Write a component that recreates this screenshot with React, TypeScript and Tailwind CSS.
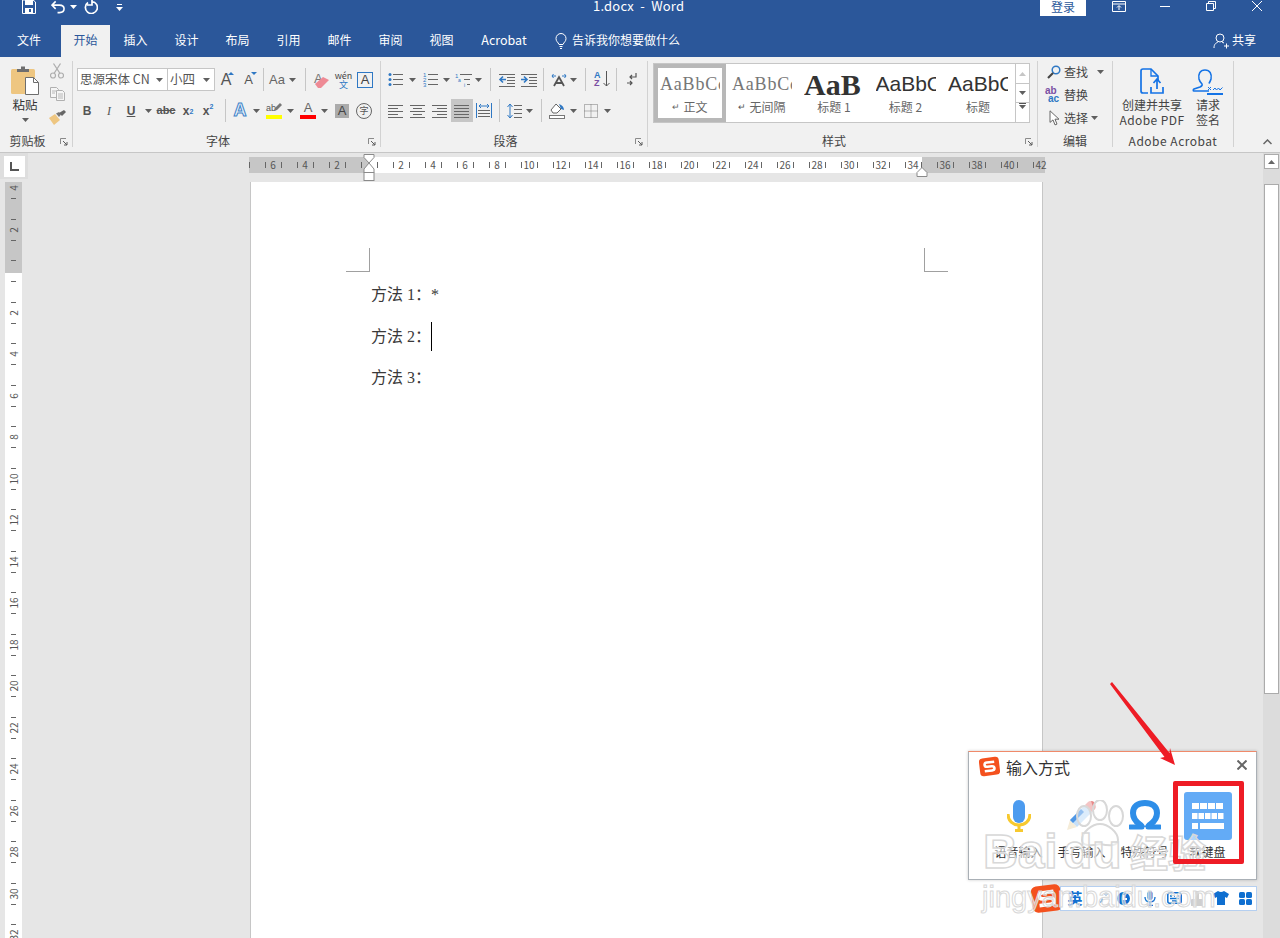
import type { ReactNode } from 'react';

const G = '#5f5f5f';
const B = '#2f78c4';

function Cell({ c, children }: { c: string; children?: ReactNode }) {
  return <div className={`flex flex-none items-center justify-center ${c}`}>{children}</div>;
}

function Caret({ color = G }: { color?: string }) {
  return (
    <svg width="7" height="4" viewBox="0 0 7 4" className="flex-none">
      <path d="M0 0h7L3.5 4z" fill={color} />
    </svg>
  );
}

function Sep() {
  return <div className="h-[23px] w-px flex-none bg-[#c6c6c6]" />;
}

function GroupSep() {
  return <div className="my-1 h-[86px] w-px flex-none bg-[#d2d2d2]" />;
}

function Launcher() {
  return (
    <svg width="8" height="8" viewBox="0 0 8 8" className="absolute right-[4px] top-[7px]">
      <path d="M.5 6V.5H6" fill="none" stroke="#8a8a8a" />
      <path d="M3 3l4 4M7 4v3H4" fill="none" stroke="#5a5a5a" />
    </svg>
  );
}

function Group({ w, label, children, launcher, lc = '' }: { w: string; label: string; children: ReactNode; launcher?: boolean; lc?: string }) {
  return (
    <div className={`flex flex-none flex-col ${w}`}>
      <div className="h-[74px]">{children}</div>
      <div className={`relative h-[20px] text-center text-[12px] leading-[20px] text-[#444] ${launcher ? 'pr-[17px]' : ''} ${lc}`}>
        {label}
        {launcher && <Launcher />}
      </div>
    </div>
  );
}

// lines helper for the paragraph icons: [x, y, width]
function Bars({ w = 16, h = 14, bars, color = '#666' }: { w?: number; h?: number; bars: number[][]; color?: string }) {
  return (
    <svg width={w} height={h} viewBox={`0 0 ${w} ${h}`} className="flex-none">
      {bars.map((b, i) => (
        <rect key={i} x={b[0]} y={b[1]} width={b[2]} height="1" fill={color} />
      ))}
    </svg>
  );
}

function ListIcon({ kind }: { kind: 'bullet' | 'number' | 'multi' }) {
  const ys = [2, 7, 12];
  if (kind === 'multi')
    return (
      <svg width="18" height="15" viewBox="0 0 18 15" className="flex-none">
        <text x="0" y="6" fontSize="6" fill={B} fontFamily="Liberation Sans">1</text>
        <text x="3" y="10" fontSize="5" fill={B} fontFamily="Liberation Sans">a</text>
        <text x="9" y="15" fontSize="5" fill={B} fontFamily="Liberation Sans">i</text>
        <rect x="5" y="2" width="12" height="1" fill="#666" />
        <rect x="9" y="7" width="6" height="1" fill="#666" />
        <rect x="12" y="12" width="3" height="1" fill="#666" />
      </svg>
    );
  return (
    <svg width="15" height="15" viewBox="0 0 15 15" className="flex-none">
      {ys.map((y, i) =>
        kind === 'bullet' ? (
          <circle key={y} cx="2" cy={y + 0.5} r="1.5" fill={B} />
        ) : (
          <text key={y} x="0" y={y + 2.5} fontSize="6" fill={B} fontFamily="Liberation Sans">{i + 1}</text>
        ),
      )}
      {ys.map((y) => (
        <rect key={y} x="5" y={y} width="10" height="1" fill="#666" />
      ))}
    </svg>
  );
}

function IndentIcon({ dir }: { dir: 'in' | 'out' }) {
  return (
    <svg width="17" height="14" viewBox="0 0 17 14" className="flex-none">
      <rect x="1" y="1" width="16" height="1" fill="#666" />
      <rect x="9" y="4" width="8" height="1" fill="#666" />
      <rect x="9" y="7" width="8" height="1" fill="#666" />
      <rect x="9" y="10" width="8" height="1" fill="#666" />
      <rect x="1" y="13" width="16" height="1" fill="#666" />
      {dir === 'out' ? (
        <path d="M8 6.5H2M5 3.5l-3 3 3 3" fill="none" stroke={B} strokeWidth="1.6" />
      ) : (
        <path d="M1 6.5h6M4 3.5l3 3-3 3" fill="none" stroke={B} strokeWidth="1.6" />
      )}
    </svg>
  );
}

function LayoutIcon() {
  return (
    <svg width="16" height="14" viewBox="0 0 16 14" className="flex-none">
      <path d="M3 13l5-9 5 9M5 10h6" fill="none" stroke="#555" strokeWidth="1.8" />
      <path d="M5 3H1M2.5 1L1 3l1.5 2M11 3h4M13.5 1L15 3l-1.5 2" fill="none" stroke={B} strokeWidth="1" />
    </svg>
  );
}

function SortIcon() {
  return (
    <div className="relative flex h-[17px] w-[16px] flex-none flex-col items-start font-['Liberation_Sans',sans-serif] text-[9px] font-bold leading-[8px]">
      <span className="text-[#2f78c4]">A</span>
      <span className="text-[#7b4fa3]">Z</span>
      <svg width="7" height="16" viewBox="0 0 7 16" className="absolute right-0 top-0">
        <path d="M3.5 0v15M.5 12l3 3 3-3" fill="none" stroke="#555" />
      </svg>
    </div>
  );
}

function MarkIcon() {
  return (
    <svg width="11" height="15" viewBox="0 0 11 15" className="flex-none">
      <path d="M10 1v4H4M6 3L4 5l2 2" fill="none" stroke="#555" strokeWidth="1.2" />
      <path d="M1 11h5M4 9l2 2-2 2" fill="none" stroke="#555" strokeWidth="1.2" />
    </svg>
  );
}

function Distributed() {
  return (
    <svg width="16" height="16" viewBox="0 0 16 16" className="flex-none">
      <path d="M.5 0v15M15.5 0v15" stroke={B} />
      <path d="M3 3h10M5 1L3 3l2 2M11 1l2 2-2 2" fill="none" stroke={B} />
      <rect x="2" y="7" width="12" height="1" fill="#666" />
      <rect x="2" y="10" width="12" height="1" fill="#666" />
      <rect x="2" y="13" width="12" height="1" fill="#666" />
    </svg>
  );
}

function LineSpacing() {
  return (
    <svg width="15" height="16" viewBox="0 0 15 16" className="flex-none">
      <path d="M3 1v14M.5 4L3 1l2.500 3M.5 12L3 15l2.500-3" fill="none" stroke={B} />
      <rect x="7" y="2" width="8" height="1" fill="#666" />
      <rect x="7" y="6" width="8" height="1" fill="#666" />
      <rect x="7" y="10" width="8" height="1" fill="#666" />
      <rect x="7" y="14" width="8" height="1" fill="#666" />
    </svg>
  );
}

function Shading() {
  return (
    <svg width="16" height="17" viewBox="0 0 16 17" className="flex-none">
      <path d="M2 8l5-6 5 5-4 4H4z" fill="#fff" stroke="#666" />
      <path d="M10 2c3 1 5 3 5 6l-3-1z" fill={B} />
      <rect x=".5" y="13.500" width="15" height="3" fill="#fff" stroke="#777" />
    </svg>
  );
}

function Borders() {
  return (
    <svg width="14" height="14" viewBox="0 0 14 14" className="flex-none">
      <path d="M.5.500h13v13H.5zM7 .5v13M.5 7h13" fill="none" stroke="#777" strokeDasharray="1 1" />
    </svg>
  );
}

function Paste() {
  return (
    <svg width="28" height="30" viewBox="0 0 28 30">
      <rect x="0" y="4" width="24" height="25" rx="1.500" fill="#eec681" />
      <path d="M6 7V4h4V1.500h4V4h4v3z" fill="#6e6e6e" />
      <path d="M14.500 12.500h8l5 5v12h-13z" fill="#fff" stroke="#6e6e6e" />
      <path d="M22.500 12.500v5h5" fill="none" stroke="#6e6e6e" />
    </svg>
  );
}

function Scissors() {
  return (
    <svg width="14" height="16" viewBox="0 0 14 16">
      <circle cx="3" cy="12.500" r="2.500" fill="none" stroke="#aeaeae" strokeWidth="1.200" />
      <circle cx="11" cy="12.500" r="2.500" fill="none" stroke="#aeaeae" strokeWidth="1.200" />
      <path d="M4 10.500L10.500.5M10 10.500L3.500.5" stroke="#aeaeae" strokeWidth="1.300" />
    </svg>
  );
}

function CopyIcon() {
  return (
    <svg width="15" height="14" viewBox="0 0 15 14">
      <path d="M.5.500h6l2 2v8h-8z" fill="#f5f5f5" stroke="#b0b0b0" />
      <path d="M6.500 3.500h6l2 2v8h-8z" fill="#f5f5f5" stroke="#b0b0b0" />
      <path d="M8 7h5M8 9h5M8 11h5M2 4h4M2 6h3" stroke="#b8b8b8" />
    </svg>
  );
}

function Painter() {
  return (
    <svg width="17" height="15" viewBox="0 0 17 15">
      <path d="M0 8l6-4 5 6-6 5z" fill="#eec681" />
      <path d="M7 3.500l3-1.500 2 2.500-2 2.500z" fill="#777" />
      <path d="M10 3l5-3 2 2-4 4z" fill="#666" />
    </svg>
  );
}

function Eraser() {
  return (
    <div className="relative h-[16px] w-[16px] flex-none">
      <span className="absolute left-[0px] top-[-3px] font-['Liberation_Sans',sans-serif] text-[13px] text-[#777]">A</span>
      <svg width="16" height="16" viewBox="0 0 16 16" className="absolute left-0 top-0">
        <path d="M1 12l8-7 6 3-8 8H4z" fill="#ee8a95" />
      </svg>
    </div>
  );
}

function Wen() {
  return (
    <div className="flex w-[18px] flex-none flex-col items-center text-[9px] leading-[9px]">
      <span className="text-[#444]">wén</span>
      <span className="text-[#2f78c4]">文</span>
    </div>
  );
}

function Search() {
  return (
    <svg width="14" height="14" viewBox="0 0 14 14" className="flex-none">
      <circle cx="9" cy="5" r="3.800" fill="none" stroke="#2f78c4" strokeWidth="1.500" />
      <path d="M6 8l-5 5" stroke="#444" strokeWidth="2.200" />
    </svg>
  );
}

function CursorIcon() {
  return (
    <svg width="11" height="16" viewBox="0 0 11 16" className="flex-none">
      <path d="M1 .8v11.600l3-2.500 2 5 2-.8-2-4.900h4z" fill="#fff" stroke="#666" />
    </svg>
  );
}

function PdfShare() {
  return (
    <svg width="24" height="26" viewBox="0 0 24 26">
      <path d="M8 25H3q-2 0-2-2V3q0-2 2-2h8l7 7v4" fill="none" stroke="#1473e6" strokeWidth="1.700" />
      <path d="M11 1v7h7" fill="none" stroke="#1473e6" strokeWidth="1.300" />
      <path d="M11 19v6h12v-6M17 21v-9M13.500 15l3.500-4 3.500 4" fill="none" stroke="#1473e6" strokeWidth="1.700" />
    </svg>
  );
}

function SignIcon() {
  return (
    <svg width="32" height="27" viewBox="0 0 32 27">
      <path d="M13 2c-5 0-7 4-6 9 .5 2 2 4 3 5 .5 1 0 2-2 3l-6 2c-1 .5-1 2 0 2h15M13 2c5 0 7 4 6 9-.5 2-1.500 3.500-2 4.500" fill="none" stroke="#1473e6" strokeWidth="1.600" />
      <path d="M16 19l3 3M19 19l-3 3" stroke="#1473e6" />
      <path d="M21 22l2-2 1.500 2 2-2 1.500 2 2.500-2.500" fill="none" stroke="#1473e6" />
      <rect x="15" y="25" width="16" height="2" fill="#1473e6" />
    </svg>
  );
}

function SogouLogo({ size }: { size: number }) {
  return (
    <svg width={size} height={size} viewBox="0 0 20 20" className="flex-none">
      <g transform="rotate(-7 10 10)">
        <rect x=".5" y="1.500" width="19" height="17" rx="3.500" fill="#f4511e" />
        <path d="M15 6H8q-2.500 0-2.500 2T8 10h4q2.500 0 2.500 2T12 14H5" fill="none" stroke="#fff" strokeWidth="2.400" />
      </g>
    </svg>
  );
}

function MicIcon() {
  return (
    <svg width="24" height="32" viewBox="0 0 24 32">
      <rect x="6" y="0" width="12" height="23" rx="6" fill="#4c9bef" />
      <path d="M1 14c0 7 5 11 11 11s11-4 11-11" fill="none" stroke="#f7c92f" strokeWidth="3" />
      <path d="M12 25v5M8 30.500h8" stroke="#f7c92f" strokeWidth="3" />
    </svg>
  );
}

function PenIcon() {
  return (
    <svg width="30" height="30" viewBox="0 0 30 30">
      <path d="M0 30l3-10 7 7z" fill="#f5ecd8" />
      <path d="M3 20L18 5l7 7-15 15z" fill="#c5dff8" />
      <path d="M3 20L14 9l3 3L6 23z" fill="#4f97e6" />
      <path d="M18 5l3-3q2-2 5 0l2 2q2 3 0 5l-3 3z" fill="#f4c4c4" />
      <path d="M24 1q2 0 3 1l1 2q1 3 0 5l-1 1z" fill="#e88888" />
    </svg>
  );
}

function OmegaIcon() {
  return (
    <svg width="32" height="30" viewBox="0 0 32 30">
      <path d="M13 27c0-3-9-4-9-14C4 6 9 3 16 3s12 3 12 10c0 10-9 11-9 14" fill="none" stroke="#2e8ee8" strokeWidth="6" />
      <path d="M1 27h12M19 27h12" stroke="#2e8ee8" strokeWidth="5" strokeLinecap="round" />
    </svg>
  );
}

function KeyboardIcon() {
  const rows = [
    { y: 11, xs: [8, 16, 24, 32], w: 7 },
    { y: 21, xs: [8, 14.500, 21, 27.500, 34], w: 5.500 },
  ];
  return (
    <svg width="48" height="48" viewBox="0 0 48 48">
      <rect width="48" height="48" rx="3" fill="#63abf6" />
      {rows.map((r) =>
        r.xs.map((x) => <rect key={`${r.y}-${x}`} x={x} y={r.y} width={r.w} height="6" fill="#fff" />),
      )}
      <rect x="8" y="31" width="6" height="6" fill="#fff" />
      <rect x="16" y="31" width="24" height="6" fill="#fff" />
    </svg>
  );
}

function TrayIcons() {
  const blue = '#0f6fd0';
  return (
    <>
      <Cell c="w-[16px] ml-[6px] h-full text-[15px] font-bold text-[#0f6fd0]">英</Cell>
      <Cell c="w-[12px] ml-[13px] h-full">
        <svg width="11" height="12" viewBox="0 0 11 12">
          <circle cx="9" cy="2" r="1.300" fill="none" stroke="#9ab8d8" />
          <path d="M5 6.500q1 2-2 4" fill="none" stroke={blue} strokeWidth="1.600" />
        </svg>
      </Cell>
      <Cell c="w-[13px] ml-[9px] h-full">
        <svg width="13" height="13" viewBox="0 0 13 13">
          <circle cx="6.500" cy="6.500" r="6.500" fill={blue} />
          <path d="M6.500 3v4h3.500" fill="none" stroke="#fff" strokeWidth="2" />
        </svg>
      </Cell>
      <Cell c="w-[12px] ml-[14px] h-full">
        <svg width="12" height="15" viewBox="0 0 12 15">
          <rect x="3.500" y="0" width="5" height="9" rx="2.500" fill={blue} />
          <path d="M1 6c0 3 2 5 5 5s5-2 5-5M6 11v3M3 14.500h6" fill="none" stroke={blue} strokeWidth="1.300" />
        </svg>
      </Cell>
      <Cell c="w-[15px] ml-[11px] h-full">
        <svg width="15" height="12" viewBox="0 0 15 12">
          <rect x=".8" y=".8" width="13.400" height="10.400" rx="2" fill="none" stroke={blue} strokeWidth="1.500" />
          <path d="M3 4h2M7 4h1M10 4h2M3 6.500h9M5 9h5" stroke={blue} strokeWidth="1.400" />
        </svg>
      </Cell>
      <Cell c="w-[12px] ml-[9px] h-full">
        <svg width="12" height="15" viewBox="0 0 12 15">
          <path d="M4 0h4v8h3q1 0 1 1v6H0V9q0-1 1-1h3z" fill="#cfcfcf" />
        </svg>
      </Cell>
      <Cell c="w-[16px] ml-[10px] h-full">
        <svg width="16" height="14" viewBox="0 0 16 14">
          <path d="M5 0q3 2 6 0l5 3-2 4-2-1v8H4V6L2 7 0 3z" fill={blue} />
        </svg>
      </Cell>
      <Cell c="w-[13px] ml-[10px] h-full">
        <svg width="13" height="13" viewBox="0 0 13 13">
          <rect width="6" height="6" rx="1.500" fill={blue} />
          <rect x="7" width="6" height="6" rx="1.500" fill={blue} />
          <rect y="7" width="6" height="6" rx="1.500" fill={blue} />
          <rect x="7" y="7" width="6" height="6" rx="1.500" fill={blue} />
        </svg>
      </Cell>
    </>
  );
}

function StyleItem({ preview, label, w, mark }: { preview: ReactNode; label: string; w: string; mark?: boolean }) {
  return (
    <div className={`flex flex-none flex-col items-center pt-[2px] ${w}`}>
      <div className="flex h-[36px] w-[60px] flex-none items-center overflow-hidden whitespace-nowrap">{preview}</div>
      <div className="flex h-[10px] flex-none items-center text-[12px] text-[#666]">
        {mark && <span className="mr-[3px] text-[9px] text-[#555]">↵</span>}
        {label}
      </div>
    </div>
  );
}

function RulerH() {
  const cells = Array.from({ length: 100 }, (_, i) => i);
  return (
    <div className="absolute left-[-4px] top-0 flex h-full">
      {cells.map((i) => (
        <div key={i} className="flex h-full w-[8px] flex-none items-center justify-center overflow-visible">
          {i % 2 === 0 && <div className="h-[6px] w-px flex-none bg-[#666]" />}
          {i % 4 === 3 && i !== 15 && (
            <span className="flex-none text-[10px] leading-none text-[#555]">{Math.abs(i - 15) / 2}</span>
          )}
        </div>
      ))}
    </div>
  );
}

function RulerV() {
  const cells = Array.from({ length: 73 }, (_, i) => i);
  return (
    <div className="absolute left-0 top-[1px] flex w-full flex-col">
      {cells.map((i) => (
        <div key={i} className="flex h-[10.375px] w-full flex-none items-center justify-center">
          {i % 2 === 1 && <div className="h-px w-[5px] flex-none bg-[#666]" />}
          {i % 4 === 0 && i !== 8 && (
            <span className="flex-none -rotate-90 text-[10px] leading-none text-[#555]">{Math.abs(i - 8) / 2}</span>
          )}
        </div>
      ))}
    </div>
  );
}

export default function App() {
  return (
    <div className="relative flex h-[938px] w-[1280px] flex-col overflow-hidden bg-[#e6e6e6] font-['Noto_Sans_CJK_SC','Liberation_Sans',sans-serif]">
      {/* title bar */}
      <div className="flex h-[57px] flex-none flex-col bg-[#2b579a] text-white">
        <div className="relative flex h-[25px] flex-none items-start">
          <Cell c="w-[14px] ml-[22px] h-[14px]">
            <svg width="14" height="14" viewBox="0 0 14 14">
              <path d="M.5 0v13.500h13V2L11 0z" fill="none" stroke="#fff" />
              <rect x="3" y="0" width="8" height="5" fill="#fff" />
              <rect x="3" y="8" width="8" height="5.500" fill="#fff" />
              <rect x="7" y="9" width="2" height="3" fill="#2b579a" />
            </svg>
          </Cell>
          <Cell c="w-[14px] ml-[15px] h-[14px]">
            <svg width="15" height="14" viewBox="0 0 15 14">
              <path d="M1 5h8q5 0 5 4t-5 4H7M5 1L1 5l4 4" fill="none" stroke="#fff" strokeWidth="1.700" />
            </svg>
          </Cell>
          <Cell c="w-[7px] ml-[5px] h-[14px]"><Caret color="#fff" /></Cell>
          <Cell c="w-[14px] ml-[7px] h-[14px]">
            <svg width="14" height="14" viewBox="0 0 14 14">
              <path d="M4 2.500A6 6 0 1 0 8 1.500M8 0v5H3" fill="none" stroke="#fff" strokeWidth="1.700" />
            </svg>
          </Cell>
          <Cell c="w-[7px] ml-[18px] h-[14px]">
            <svg width="7" height="8" viewBox="0 0 7 8">
              <rect x="1" y="1" width="5" height="1" fill="#fff" />
              <path d="M0 4h7L3.500 8z" fill="#fff" />
            </svg>
          </Cell>
          <div className="ml-[470px] w-[96px] flex-none whitespace-pre text-[13px] leading-[11px] tracking-[.2px]">1.docx  -  Word</div>
          <div className="ml-[351px] h-[16px] w-[46px] flex-none bg-white text-center text-[12px] leading-[14px] text-[#2b579a]">登录</div>
          <Cell c="w-[14px] ml-[26px] h-[12px]">
            <svg width="14" height="11" viewBox="0 0 14 11">
              <path d="M.5.500h13v10H.5zM.5 3h13M7 9V5M5 6.500L7 4.500l2 2" fill="none" stroke="#fff" />
            </svg>
          </Cell>
          <Cell c="w-[10px] ml-[34px] h-[12px]"><div className="h-px w-[10px] bg-white" /></Cell>
          <Cell c="w-[10px] ml-[36px] h-[12px]">
            <svg width="10" height="10" viewBox="0 0 10 10">
              <path d="M.5 2.500h7v7h-7zM2.500 2.500V.5h7v7h-2" fill="none" stroke="#fff" />
            </svg>
          </Cell>
          <Cell c="w-[10px] ml-[36px] h-[12px]">
            <svg width="10" height="10" viewBox="0 0 10 10">
              <path d="M0 0l10 10M10 0L0 10" stroke="#fff" />
            </svg>
          </Cell>
        </div>
        <div className="flex h-[32px] flex-none items-stretch text-[12px] leading-[30px]">
          <div className="ml-[4px] w-[50px] flex-none text-center">文件</div>
          <div className="ml-[7px] w-[49px] flex-none bg-[#f1f1f1] text-center text-[#2b579a]">开始</div>
          <div className="w-[51px] flex-none text-center">插入</div>
          <div className="w-[51px] flex-none text-center">设计</div>
          <div className="w-[51px] flex-none text-center">布局</div>
          <div className="w-[51px] flex-none text-center">引用</div>
          <div className="w-[51px] flex-none text-center">邮件</div>
          <div className="w-[51px] flex-none text-center">审阅</div>
          <div className="w-[51px] flex-none text-center">视图</div>
          <div className="w-[74px] flex-none text-center text-[12.500px]">Acrobat</div>
          <Cell c="w-[12px] ml-[14px]">
            <svg width="12" height="16" viewBox="0 0 12 16">
              <path d="M4 11.500C3 9 1 8.500 1 5.500a5 5 0 0 1 10 0c0 3-2 3.500-3 6zM4.500 13.500h3M5 15.500h2" fill="none" stroke="#fff" />
            </svg>
          </Cell>
          <div className="ml-[5px] w-[110px] flex-none whitespace-nowrap">告诉我你想要做什么</div>
          <Cell c="w-[16px] ml-[531px]">
            <svg width="16" height="16" viewBox="0 0 16 16">
              <circle cx="7" cy="5" r="4" fill="none" stroke="#fff" />
              <path d="M1 15c0-4 2-5 4-6M9 9l2 1M11 13h5M13.500 10.500v5" fill="none" stroke="#fff" />
            </svg>
          </Cell>
          <div className="ml-[3px] w-[26px] flex-none whitespace-nowrap">共享</div>
        </div>
      </div>

      {/* ribbon */}
      <div className="flex h-[96px] flex-none border-b border-[#c6c6c6] bg-[#f1f1f1]">
        <Group w="w-[72px]" label="剪贴板" launcher>
          <div className="flex">
            <div className="flex w-[50px] flex-none flex-col items-center pt-[8px]">
              <Paste />
              <div className="mt-[1px] text-[12.500px] leading-[18px] text-[#333]">粘贴</div>
              <div className="mt-[4px]"><Caret /></div>
            </div>
            <div className="flex w-[14px] flex-none flex-col items-center pt-[6px]">
              <Cell c="h-[16px] mb-[7px]"><Scissors /></Cell>
              <Cell c="h-[16px] mb-[7px]"><CopyIcon /></Cell>
              <Cell c="h-[16px]"><Painter /></Cell>
            </div>
          </div>
        </Group>
        <GroupSep />
        <Group w="w-[307px]" label="字体" launcher>
          <div className="flex pl-[4px] pt-[11px]">
            <div className="flex h-[23px] w-[91px] flex-none items-center border border-[#c6c6c6] bg-white pl-[2px] text-[12.500px] text-[#555]">
              <span className="flex-1 whitespace-nowrap">思源宋体 CN</span>
              <span className="mr-[4px]"><Caret /></span>
            </div>
            <div className="ml-[-1px] flex h-[23px] w-[48px] flex-none items-center border border-[#c6c6c6] bg-white pl-[2px] text-[12.500px] text-[#555]">
              <span className="flex-1">小四</span>
              <span className="mr-[4px]"><Caret /></span>
            </div>
            <Cell c="w-[22px] h-[23px] relative text-[16px] text-[#555] font-['Liberation_Sans',sans-serif]">
              A<span className="absolute right-[3px] top-[4px]"><svg width="6" height="3" viewBox="0 0 6 3"><path d="M0 3h6L3 0z" fill="#2f78c4" /></svg></span>
            </Cell>
            <Cell c="w-[23px] h-[23px] relative text-[13px] text-[#555] font-['Liberation_Sans',sans-serif]">
              A<span className="absolute right-[3px] top-[4px]"><svg width="6" height="3" viewBox="0 0 6 3"><path d="M0 0h6L3 3z" fill="#2f78c4" /></svg></span>
            </Cell>
            <Cell c="w-[6px] h-[23px]"><Sep /></Cell>
            <Cell c="w-[33px] h-[23px] gap-[4px] text-[13px] text-[#666] font-['Liberation_Sans',sans-serif]">Aa<Caret /></Cell>
            <Cell c="w-[12px] h-[23px]"><Sep /></Cell>
            <Cell c="w-[22px] h-[23px]"><Eraser /></Cell>
            <Cell c="w-[21px] h-[23px]"><Wen /></Cell>
            <Cell c="w-[22px] h-[23px]">
              <div className="flex h-[16px] w-[16px] items-center justify-center border border-[#2f78c4] font-['Liberation_Sans',sans-serif] text-[13px] text-[#444]">A</div>
            </Cell>
          </div>
          <div className="mt-[8px] flex h-[23px] items-stretch font-['Liberation_Sans',sans-serif] text-[#555]">
            <Cell c="w-[28px] text-[12px] font-bold">B</Cell>
            <Cell c="w-[16px] text-[12px] italic font-['Liberation_Serif',serif]">I</Cell>
            <Cell c="w-[28px] text-[12px] font-bold underline">U</Cell>
            <Cell c="w-[6px]"><Caret /></Cell>
            <Cell c="w-[30px] text-[11px] font-bold line-through">abc</Cell>
            <Cell c="w-[14px] text-[12px] font-bold">x<sub className="text-[7px] text-[#2f78c4]">2</sub></Cell>
            <Cell c="w-[26px] text-[12px] font-bold">x<sup className="text-[7px] text-[#2f78c4]">2</sup></Cell>
            <Cell c="w-[8px]"><Sep /></Cell>
            <Cell c="w-[22px] text-[18px] font-bold text-[#eaf3fb] [-webkit-text-stroke:1px_#3f83c8]">A</Cell>
            <Cell c="w-[11px]"><Caret /></Cell>
            <Cell c="w-[24px]">
              <div className="relative flex w-[16px] flex-col items-start">
                <span className="text-[9px] leading-[10px] text-[#555]">ab</span>
                <svg width="9" height="10" viewBox="0 0 9 10" className="absolute right-0 top-[-1px]">
                  <path d="M1 9l1-3 5-5 2 2-5 5z" fill="#777" />
                </svg>
                <div className="mt-[2px] h-[4px] w-[16px] bg-[#ffff00]" />
              </div>
            </Cell>
            <Cell c="w-[8px]"><Caret /></Cell>
            <Cell c="w-[28px]">
              <div className="flex w-[16px] flex-col items-center">
                <span className="text-[13px] leading-[12px] text-[#666]">A</span>
                <div className="mt-[1px] h-[4px] w-[16px] bg-[#ff0000]" />
              </div>
            </Cell>
            <Cell c="w-[4px]"><Caret /></Cell>
            <Cell c="w-[32px]">
              <div className="flex h-[14px] w-[14px] items-center justify-center bg-[#ababab] text-[13px] text-[#444]">A</div>
            </Cell>
            <Cell c="w-[12px]">
              <div className="flex h-[16px] w-[16px] flex-none items-center justify-center rounded-full border border-[#666] font-['Noto_Sans_CJK_SC',sans-serif] text-[9px] text-[#555]">字</div>
            </Cell>
          </div>
        </Group>
        <GroupSep />
        <Group w="w-[266px]" label="段落" launcher>
          <div className="mt-[11px] flex h-[23px] items-stretch">
            <Cell c="w-[29px]"><ListIcon kind="bullet" /></Cell>
            <Cell c="w-[4px]"><Caret /></Cell>
            <Cell c="w-[24px] ml-[4px]"><ListIcon kind="number" /></Cell>
            <Cell c="w-[8px]"><Caret /></Cell>
            <Cell c="w-[24px] ml-[2px]"><ListIcon kind="multi" /></Cell>
            <Cell c="w-[4px]"><Caret /></Cell>
            <Cell c="w-[20px]"><Sep /></Cell>
            <Cell c="w-[12px]"><IndentIcon dir="out" /></Cell>
            <Cell c="w-[30px] ml-[1px]"><IndentIcon dir="in" /></Cell>
            <Cell c="w-[1px]"><Sep /></Cell>
            <Cell c="w-[21px] ml-[4px]"><LayoutIcon /></Cell>
            <Cell c="w-[8px]"><Caret /></Cell>
            <Cell c="w-[16px]"><Sep /></Cell>
            <Cell c="w-[18px]"><SortIcon /></Cell>
            <Cell c="w-[10px]"><Sep /></Cell>
            <Cell c="w-[20px]"><MarkIcon /></Cell>
          </div>
          <div className="mt-[8px] flex h-[23px] items-stretch">
            <Cell c="w-[22px] ml-[4px]"><Bars bars={[[0,1,15],[0,4,10],[0,7,15],[0,10,10],[0,13,15]]} /></Cell>
            <Cell c="w-[22px]"><Bars bars={[[0,1,15],[3,4,9],[0,7,15],[3,10,9],[0,13,15]]} /></Cell>
            <Cell c="w-[22px]"><Bars bars={[[0,1,15],[5,4,10],[0,7,15],[5,10,10],[0,13,15]]} /></Cell>
            <Cell c="w-[22px] bg-[#c6c6c6]"><Bars bars={[[0,1,15],[0,4,15],[0,7,15],[0,10,15],[0,13,15]]} /></Cell>
            <Cell c="w-[22px]"><Distributed /></Cell>
            <Cell c="w-[8px]"><Sep /></Cell>
            <Cell c="w-[23px]"><LineSpacing /></Cell>
            <Cell c="w-[6px]"><Caret /></Cell>
            <Cell c="w-[18px]"><Sep /></Cell>
            <Cell c="w-[14px]"><Shading /></Cell>
            <Cell c="w-[18px]"><Caret /></Cell>
            <Cell c="w-[17px]"><Borders /></Cell>
            <Cell c="w-[16px]"><Caret /></Cell>
          </div>
        </Group>
        <GroupSep />
        <Group w="w-[389px]" label="样式" launcher>
          <div className="ml-[5px] mt-[6px] flex h-[60px] w-[377px] border border-[#c6c6c6] bg-white">
            <div className="flex w-[72px] flex-none flex-col items-center border-[4px] border-[#b8b8b8] bg-white">
              <div className="flex h-[32px] w-[60px] flex-none items-center overflow-hidden whitespace-nowrap font-['Liberation_Serif',serif] text-[18px] tracking-[.8px] text-[#777]">AaBbCc</div>
              <div className="flex h-[14px] flex-none items-center text-[12px] text-[#666]">
                <span className="mr-[3px] text-[9px]">↵</span>正文
              </div>
            </div>
            <StyleItem w="w-[72px]" mark label="无间隔" preview={<span className="font-['Liberation_Serif',serif] text-[18px] tracking-[.8px] text-[#777]">AaBbCc</span>} />
            <StyleItem w="w-[72px]" label="标题 1" preview={<span className="font-['Liberation_Serif',serif] text-[30px] font-bold text-[#333]">AaB</span>} />
            <StyleItem w="w-[71px]" label="标题 2" preview={<span className="font-['Liberation_Sans',sans-serif] text-[21px] text-[#333]">AaBbC</span>} />
            <StyleItem w="w-[74px]" label="标题" preview={<span className="font-['Liberation_Sans',sans-serif] text-[21px] text-[#333]">AaBbC</span>} />
            <div className="flex flex-1 flex-col border-l border-[#c6c6c6]">
              <Cell c="h-[20px] border-b border-[#c6c6c6]">
                <svg width="7" height="4" viewBox="0 0 7 4"><path d="M0 4h7L3.500 0z" fill="#c6c6c6" /></svg>
              </Cell>
              <Cell c="h-[19px] border-b border-[#c6c6c6]"><Caret /></Cell>
              <Cell c="flex-1 flex-col gap-px">
                <div className="h-px w-[7px] bg-[#555]" />
                <Caret />
              </Cell>
            </div>
          </div>
        </Group>
        <GroupSep />
        <Group w="w-[74px]" label="编辑">
          <div className="flex flex-col pt-[3px] text-[12px] text-[#444]">
            <div className="flex h-[23px] items-center">
              <Cell c="w-[14px] ml-[9px]"><Search /></Cell>
              <span className="ml-[3px] w-[24px] whitespace-nowrap">查找</span>
              <span className="ml-[9px]"><Caret /></span>
            </div>
            <div className="flex h-[23px] items-center">
              <div className="ml-[7px] flex w-[17px] flex-none flex-col font-['Liberation_Sans',sans-serif] text-[10px] font-bold leading-[8px]">
                <span className="text-[#7b4fa3]">ab</span>
                <span className="ml-[3px] text-[#2f78c4]">ac</span>
              </div>
              <span className="ml-[2px] whitespace-nowrap">替换</span>
            </div>
            <div className="flex h-[23px] items-center">
              <Cell c="w-[14px] ml-[9px]"><CursorIcon /></Cell>
              <span className="ml-[3px] w-[24px] whitespace-nowrap">选择</span>
              <span className="ml-[3px]"><Caret /></span>
            </div>
          </div>
        </Group>
        <GroupSep />
        <Group w="w-[120px]" label="Adobe Acrobat" lc="tracking-[.5px]">
          <div className="flex pt-[11px] text-[12px] leading-[15px] text-[#444]">
            <div className="flex w-[78px] flex-none flex-col items-center">
              <PdfShare />
              <div className="mt-[3px] whitespace-nowrap text-center">创建并共享<br /><span className="tracking-[.4px]">Adobe PDF</span></div>
            </div>
            <div className="ml-[-1px] flex w-[36px] flex-none flex-col items-center">
              <SignIcon />
              <div className="mt-[2px] whitespace-nowrap text-center">请求<br />签名</div>
            </div>
          </div>
        </Group>
        <GroupSep />
        <div className="flex flex-1 items-end justify-end pb-[7px] pr-[8px]">
          <svg width="9" height="6" viewBox="0 0 9 6"><path d="M.5 5l4-4 4 4" fill="none" stroke="#666" strokeWidth="1.500" /></svg>
        </div>
      </div>

      {/* document area */}
      <div className="flex min-h-0 flex-1">
        <div className="flex min-w-0 flex-1 flex-col">
          <div className="flex h-[29px] flex-none">
            <div className="flex h-[26px] w-[28px] flex-none items-center justify-center bg-[#dedede]">
              <div className="flex h-[21px] w-[21px] items-center justify-center bg-white">
                <svg width="9" height="9" viewBox="0 0 9 9"><path d="M1 0v8h8" fill="none" stroke="#555" strokeWidth="2" /></svg>
              </div>
            </div>
            <div className="relative ml-[221px] mt-[4px] flex h-[16px] w-[796px] flex-none">
              <div className="w-[120px] flex-none bg-[#c6c6c6]" />
              <div className="w-[553px] flex-none bg-white" />
              <div className="flex-1 bg-[#c6c6c6]" />
              <RulerH />
              <svg width="12" height="27" viewBox="0 0 12 27" className="absolute left-[114px] top-[-3px]">
                <path d="M1 .5h10v3L6 9 1 3.500z M6 9l5 6v3.500H1V15z" fill="#fff" stroke="#8a8a8a" />
                <rect x="1" y="18.500" width="10" height="8" fill="#fff" stroke="#8a8a8a" />
              </svg>
              <svg width="12" height="10" viewBox="0 0 12 10" className="absolute left-[667px] top-[10px]">
                <path d="M6 .5l5 5v4H1v-4z" fill="#fff" stroke="#8a8a8a" />
              </svg>
            </div>
          </div>
          <div className="flex min-h-0 flex-1">
            <div className="relative ml-[5px] flex w-[17px] flex-none flex-col">
              <div className="h-[91px] flex-none bg-[#c6c6c6]" />
              <div className="flex-1 bg-white" />
              <RulerV />
            </div>
            <div className="relative ml-[228px] w-[793px] flex-none border-x border-[#c6c6c6] bg-white pl-[120px] pt-[92px] font-['Liberation_Serif','Noto_Sans_CJK_SC',serif] text-[16px] leading-[41.500px] text-[#3a3a3a]">
              <div className="absolute left-[95px] top-[66px] h-[24px] w-[24px] border-b border-r border-[#a0a0a0]" />
              <div className="absolute left-[673px] top-[66px] h-[24px] w-[24px] border-b border-l border-[#a0a0a0]" />
              <div>方法 1：*</div>
              <div className="flex items-center">
                方法 2：
                <div className="h-[29px] w-px bg-black" />
              </div>
              <div>方法 3：</div>
            </div>
          </div>
        </div>
        <div className="flex w-[17px] flex-none flex-col items-center bg-[#dcdcdc] pt-px">
          <div className="flex h-[15px] w-[15px] flex-none items-center justify-center border border-[#ababab] bg-white">
            <svg width="7" height="4" viewBox="0 0 7 4"><path d="M0 4h7L3.500 0z" fill="#666" /></svg>
          </div>
          <div className="mt-[15px] h-[510px] w-[15px] flex-none border border-[#ababab] bg-white" />
        </div>
      </div>

      {/* sogou popup */}
      <div className="absolute left-[968px] top-[751px] flex h-[129px] w-[289px] flex-col border border-[#aab0b6] border-t-[#f08a6a] bg-white shadow-[0_0_3px_rgba(0,0,0,.2)]">
        <div className="relative flex h-[33px] flex-none items-center pb-[4px] pl-[10px] text-[16px] text-[#333]">
          <SogouLogo size={21} />
          <span className="ml-[6px]">输入方式</span>
          <svg width="10" height="10" viewBox="0 0 10 10" className="absolute right-[9px] top-[8px]">
            <path d="M.5.500l9 9M9.500.5l-9 9" stroke="#666" strokeWidth="2" />
          </svg>
        </div>
        <div className="flex pl-[18px]">
          <div className="flex w-[63px] flex-none flex-col items-center pt-[15px]"><MicIcon /></div>
          <div className="flex w-[63px] flex-none flex-col items-center pt-[15px]"><PenIcon /></div>
          <div className="flex w-[63px] flex-none flex-col items-center pt-[15px]"><OmegaIcon /></div>
          <div className="flex w-[63px] flex-none flex-col items-center pt-[7px]"><KeyboardIcon /></div>
        </div>
        <div className="mt-[4px] flex pl-[18px] text-[12px] leading-[16px] text-[#333]">
          <div className="w-[63px] flex-none text-center">语音输入</div>
          <div className="w-[63px] flex-none text-center">手写输入</div>
          <div className="w-[63px] flex-none text-center">特殊符号</div>
          <div className="w-[63px] flex-none text-center">软键盘</div>
        </div>
      </div>

      {/* sogou tray */}
      <div className="absolute left-[1031px] top-[883px] flex h-[30px] items-center">
        <SogouLogo size={31} />
        <div className="ml-[-2px] flex h-[25px] w-[197px] flex-none items-center border border-[#b5cff0] bg-white">
          <TrayIcons />
        </div>
      </div>

      {/* baidu watermark */}
      <div className="pointer-events-none absolute left-[982px] top-[800px] h-[115px] w-[232px]">
        <svg width="70" height="50" viewBox="0 0 70 50" className="absolute left-[82px] top-0">
          <g fill="#ffffff66" stroke="#d8d8d8" strokeWidth="2">
            <ellipse cx="20" cy="16" rx="7" ry="10" />
            <ellipse cx="36" cy="10" rx="7" ry="10" />
            <ellipse cx="52" cy="16" rx="7" ry="10" />
            <path d="M36 24c-8 0-18 8-18 16 0 6 8 6 18 4 10 2 18 2 18-4 0-8-10-16-18-16z" />
          </g>
        </svg>
        <span className="absolute left-[1px] top-[22px] font-['Liberation_Sans',sans-serif] text-[48px] font-bold leading-[60px] text-white/50 [-webkit-text-stroke:1.500px_#d8d8d8]">Bai</span>
        <span className="absolute left-[81px] top-[22px] font-['Liberation_Sans',sans-serif] text-[48px] font-bold leading-[60px] text-white/50 [-webkit-text-stroke:1.500px_#d8d8d8]">du</span>
        <span className="absolute left-[148px] top-[26px] text-[38px] font-bold leading-[50px] text-white/50 [-webkit-text-stroke:1.500px_#d8d8d8]">经验</span>
        <span className="absolute left-0 top-[79px] font-['Liberation_Sans',sans-serif] text-[29px] leading-[36px] text-white/50 [-webkit-text-stroke:1px_#d8d8d8]">jingyan.baidu.com</span>
      </div>

      {/* red annotation */}
      <div className="absolute left-[1173px] top-[781px] h-[83px] w-[71px] rounded-[2px] border-[5px] border-[#ee1c25]" />
      <svg width="80" height="95" viewBox="0 0 80 95" className="absolute left-[1105px] top-[678px]">
        <path d="M7 4L64.500 75 65 70l5 17-15-7 4.500-1L5 6z" fill="#ee1c25" />
      </svg>
    </div>
  );
}
